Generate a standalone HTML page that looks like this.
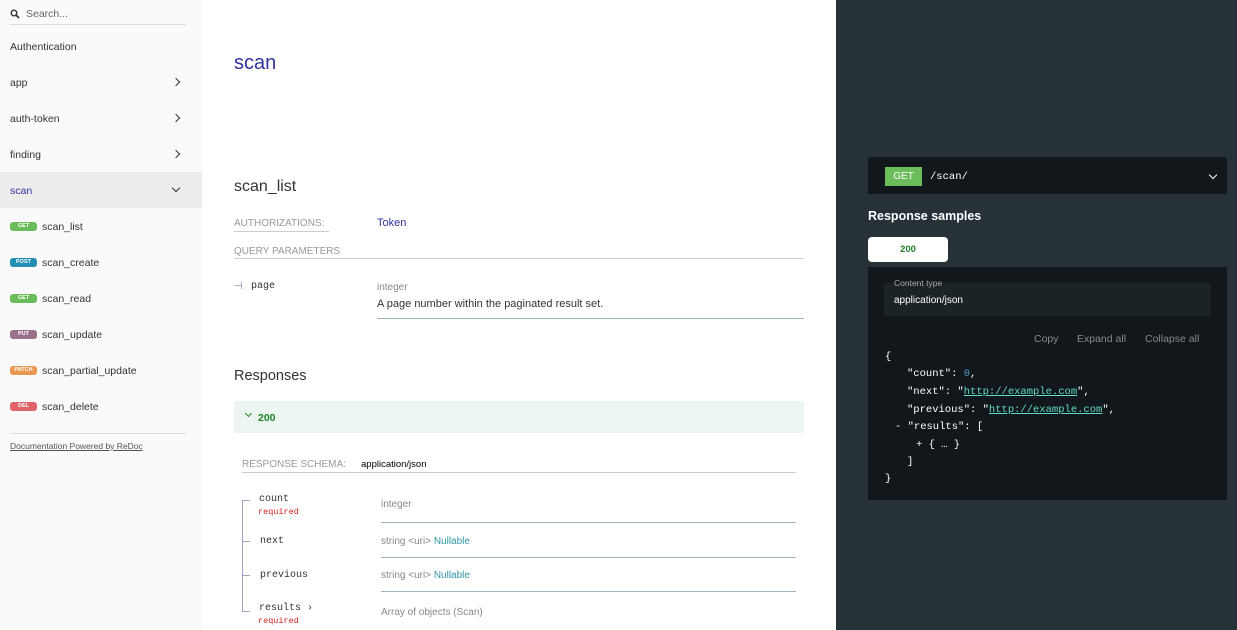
<!DOCTYPE html><html><head><style>
*{margin:0;padding:0;box-sizing:border-box}
body{width:1237px;height:630px;overflow:hidden;font-family:"Liberation Sans",sans-serif;position:relative;background:#fff}
.a{position:absolute;white-space:nowrap;margin-top:1px}
#side{position:absolute;left:0;top:0;width:202px;height:630px;background:#fafafa}
#right{position:absolute;left:836px;top:0;width:401px;height:630px;background:#263238}
.nav{font-size:10.5px;color:#333;left:10px}
.chev{position:absolute;left:173px;width:6px;height:6px;border-right:1.5px solid #333;border-bottom:1.5px solid #333;transform:rotate(-45deg)}
.b{position:absolute;left:10px;width:27px;height:9px;border-radius:3px;color:#fff;font-size:5.5px;font-weight:bold;text-align:center;line-height:9px;margin-top:1px}
.mono{font-family:"Liberation Mono",monospace}
.cap{font-size:10px;color:#999;text-transform:uppercase}
.hr{position:absolute;height:1px;background:#9fb4be}
.cl{font-family:"Liberation Mono",monospace;font-size:10.5px;color:#fff;position:absolute;white-space:pre;margin-top:2px}
.lk{color:#5fdcc8;text-decoration:underline}
</style></head><body>
<div id="side">
<svg class="a" style="left:10px;top:8px" width="10" height="10" viewBox="0 0 10 10"><circle cx="4" cy="4" r="2.8" fill="none" stroke="#333" stroke-width="1.4"/><line x1="6" y1="6" x2="9" y2="9" stroke="#333" stroke-width="1.6"/></svg>
<div class="a" style="left:26px;top:7px;font-size:10.5px;color:#666">Search...</div>
<div class="a" style="left:10px;top:23px;width:176px;height:1px;background:#ddd"></div>
<div class="a nav" style="top:40px">Authentication</div>
<div class="a nav" style="top:76px">app</div><div class="chev" style="top:79px"></div>
<div class="a nav" style="top:112px">auth-token</div><div class="chev" style="top:115px"></div>
<div class="a nav" style="top:148px">finding</div><div class="chev" style="top:151px"></div>
<div class="a" style="left:0;top:171px;width:202px;height:36px;background:#ededed"></div>
<div class="a nav" style="top:184px;color:#32329f">scan</div><div class="chev" style="top:185px;transform:rotate(45deg)"></div>
<div class="b" style="top:221px;background:#6bbd5b">GET</div><div class="a nav" style="left:42px;top:220px">scan_list</div>
<div class="b" style="top:257px;background:#248fb2">POST</div><div class="a nav" style="left:42px;top:256px">scan_create</div>
<div class="b" style="top:293px;background:#6bbd5b">GET</div><div class="a nav" style="left:42px;top:292px">scan_read</div>
<div class="b" style="top:329px;background:#9b708b">PUT</div><div class="a nav" style="left:42px;top:328px">scan_update</div>
<div class="b" style="top:365px;background:#e8984f">PATCH</div><div class="a nav" style="left:42px;top:364px">scan_partial_update</div>
<div class="b" style="top:401px;background:#e0636b">DEL</div><div class="a nav" style="left:42px;top:400px">scan_delete</div>
<div class="a" style="left:10px;top:432px;width:176px;height:1px;background:#ddd"></div>
<div class="a" style="left:10px;top:440px;font-size:8.5px;color:#555;text-decoration:underline">Documentation Powered by ReDoc</div>
</div>

<div class="a" style="left:234px;top:51px;font-size:20px;color:#32329f">scan</div>
<div class="a" style="left:234px;top:177px;font-size:16px;color:#333">scan_list</div>
<div class="a cap" style="left:234px;top:217px">Authorizations:</div>
<div class="hr" style="left:234px;top:231px;width:95px;background:#ccc"></div>
<div class="a" style="left:377px;top:216px;font-size:11px;color:#32329f">Token</div>
<div class="a cap" style="left:234px;top:245px">Query Parameters</div>
<div class="hr" style="left:234px;top:258px;width:570px;background:#ccc"></div>
<div class="a" style="left:234px;top:280px;font-size:10px;color:#7c7cbb">⊣</div>
<div class="a mono" style="left:251px;top:280px;font-size:10px;color:#333">page</div>
<div class="a" style="left:377px;top:281px;font-size:10px;color:#888">integer</div>
<div class="a" style="left:377px;top:297px;font-size:11px;color:#333">A page number within the paginated result set.</div>
<div class="hr" style="left:377px;top:318px;width:427px"></div>
<div class="a" style="left:234px;top:367px;font-size:14.5px;color:#333">Responses</div>
<div class="a" style="left:234px;top:400px;width:570px;height:32px;background:#edf5f0;border-radius:2px"></div>
<div class="a" style="left:246px;top:410px;width:5px;height:5px;border-right:1.5px solid #1d8127;border-bottom:1.5px solid #1d8127;transform:rotate(45deg)"></div>
<div class="a" style="left:258px;top:411px;font-size:10.5px;font-weight:bold;color:#1d8127">200</div>
<div class="a cap" style="left:242px;top:458px">Response Schema:</div>
<div class="a" style="left:361px;top:458px;font-size:9.5px;color:#000">application/json</div>
<div class="hr" style="left:242px;top:472px;width:554px;background:#ccc"></div>
<div class="a" style="left:242px;top:499px;width:1px;height:112px;background:#9ea3c7"></div>
<div class="a" style="left:242px;top:499px;width:8px;height:1px;background:#9ea3c7"></div>
<div class="a" style="left:242px;top:540px;width:8px;height:1px;background:#9ea3c7"></div>
<div class="a" style="left:242px;top:574px;width:8px;height:1px;background:#9ea3c7"></div>
<div class="a" style="left:242px;top:610px;width:8px;height:1px;background:#9ea3c7"></div>
<div class="a mono" style="left:259px;top:493px;font-size:10px;color:#333">count</div>
<div class="a mono" style="left:258px;top:506px;font-size:8.5px;color:#d41f1c">required</div>
<div class="a mono" style="left:260px;top:535px;font-size:10px;color:#333">next</div>
<div class="a mono" style="left:260px;top:569px;font-size:10px;color:#333">previous</div>
<div class="a mono" style="left:259px;top:602px;font-size:10px;color:#333">results ›</div>
<div class="a mono" style="left:258px;top:615px;font-size:8.5px;color:#d41f1c">required</div>
<div class="a" style="left:381px;top:498px;font-size:10px;color:#888">integer</div>
<div class="hr" style="left:381px;top:522px;width:415px"></div>
<div class="a" style="left:381px;top:535px;font-size:10px;color:#888">string &lt;uri&gt; <span style="color:#3195a6">Nullable</span></div>
<div class="hr" style="left:381px;top:557px;width:415px"></div>
<div class="a" style="left:381px;top:569px;font-size:10px;color:#888">string &lt;uri&gt; <span style="color:#3195a6">Nullable</span></div>
<div class="hr" style="left:381px;top:591px;width:415px"></div>
<div class="a" style="left:381px;top:606px;font-size:10px;color:#888">Array of objects (Scan)</div>

<div id="right"></div>
<div class="a" style="left:868px;top:156px;width:359px;height:37px;background:#11171a;border-radius:3px 3px 0 0"></div>
<div class="a" style="left:885px;top:166px;width:37px;height:19px;background:#6bbd5b;color:#fff;font-size:10px;text-align:center;line-height:19px">GET</div>
<div class="a mono" style="left:930px;top:170px;font-size:10.5px;color:#fff">/scan/</div>
<div class="a" style="left:1210px;top:171px;width:6px;height:6px;border-right:1.5px solid #fff;border-bottom:1.5px solid #fff;transform:rotate(45deg)"></div>
<div class="a" style="left:868px;top:208px;font-size:12.5px;font-weight:bold;color:#fff">Response samples</div>
<div class="a" style="left:868px;top:236px;width:80px;height:25px;background:#fff;border-radius:4px;font-size:9.5px;font-weight:bold;color:#1d8127;text-align:center;line-height:25px">200</div>
<div class="a" style="left:868px;top:266px;width:359px;height:233px;background:#11171a"></div>
<div class="a" style="left:884px;top:282px;width:327px;height:33px;background:#1c2327"></div>
<div class="a" style="left:894px;top:277px;font-size:8.5px;color:#aaa">Content type</div>
<div class="a" style="left:894px;top:294px;font-size:10px;color:#fff">application/json</div>
<div class="a" style="left:1034px;top:332px;font-size:10.5px;color:#888">Copy</div>
<div class="a" style="left:1077px;top:332px;font-size:10.5px;color:#888">Expand all</div>
<div class="a" style="left:1145px;top:332px;font-size:10.5px;color:#888">Collapse all</div>
<div class="cl" style="left:885px;top:349px">{</div>
<div class="cl" style="left:907px;top:366px">"count": <span style="color:#4d9fc8">0</span>,</div>
<div class="cl" style="left:907px;top:384px">"next": "<span class="lk">http://example.com</span>",</div>
<div class="cl" style="left:907px;top:402px">"previous": "<span class="lk">http://example.com</span>",</div>
<div class="cl" style="left:895px;top:419px">- "results": [</div>
<div class="cl" style="left:916px;top:437px">+ { … }</div>
<div class="cl" style="left:907px;top:454px">]</div>
<div class="cl" style="left:885px;top:471px">}</div>
</body></html>
